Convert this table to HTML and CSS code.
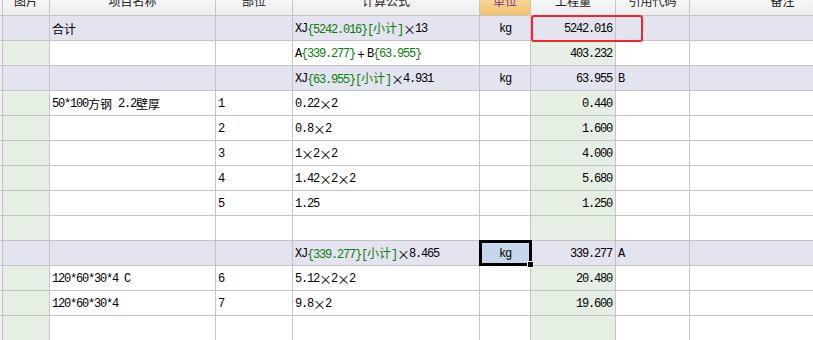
FILE: index.html
```html
<!DOCTYPE html>
<html lang="zh">
<head>
<meta charset="utf-8">
<title>工程量表</title>
<link rel="stylesheet" href="styles.css">
</head>
<body>
<div class="sheet">
  <div class="row head">
    <div class="cell"></div>
    <div class="cell"><span class="c">图片</span></div>
    <div class="cell"><span class="c">项目名称</span></div>
    <div class="cell"><span class="c">部位</span></div>
    <div class="cell"><span class="c">计算公式</span></div>
    <div class="cell unit-h"><span class="c">单位</span></div>
    <div class="cell"><span class="c">工程量</span></div>
    <div class="cell"><span class="c">引用代码</span></div>
    <div class="cell"><span class="c">备注</span></div>
  </div>

  <div class="row sum">
    <div class="cell"></div><div class="cell"></div>
    <div class="cell l"><span class="c">合计</span></div>
    <div class="cell"></div>
    <div class="cell l">XJ<span class="g">{5242.016}[<span class="c">小计</span>]</span><span class="x">×</span>13</div>
    <div class="cell m">kg</div>
    <div class="cell r boxed">5242.016<span class="redbox"></span></div>
    <div class="cell"></div><div class="cell"></div>
  </div>

  <div class="row">
    <div class="cell"></div><div class="cell"></div><div class="cell"></div><div class="cell"></div>
    <div class="cell l">A<span class="g">{339.277}</span><span class="x">+</span>B<span class="g">{63.955}</span></div>
    <div class="cell"></div>
    <div class="cell r">403.232</div>
    <div class="cell"></div><div class="cell"></div>
  </div>

  <div class="row sum">
    <div class="cell"></div><div class="cell"></div><div class="cell"></div><div class="cell"></div>
    <div class="cell l">XJ<span class="g">{63.955}[<span class="c">小计</span>]</span><span class="x">×</span>4.931</div>
    <div class="cell m">kg</div>
    <div class="cell r">63.955</div>
    <div class="cell l">B</div>
    <div class="cell"></div>
  </div>

  <div class="row">
    <div class="cell"></div><div class="cell"></div>
    <div class="cell l">50*100<span class="c">方钢</span><span class="sp"></span>2.2<span class="c">壁厚</span></div>
    <div class="cell l">1</div>
    <div class="cell l">0.22<span class="x">×</span>2</div>
    <div class="cell"></div>
    <div class="cell r">0.440</div>
    <div class="cell"></div><div class="cell"></div>
  </div>

  <div class="row">
    <div class="cell"></div><div class="cell"></div><div class="cell"></div>
    <div class="cell l">2</div>
    <div class="cell l">0.8<span class="x">×</span>2</div>
    <div class="cell"></div>
    <div class="cell r">1.600</div>
    <div class="cell"></div><div class="cell"></div>
  </div>

  <div class="row">
    <div class="cell"></div><div class="cell"></div><div class="cell"></div>
    <div class="cell l">3</div>
    <div class="cell l">1<span class="x">×</span>2<span class="x">×</span>2</div>
    <div class="cell"></div>
    <div class="cell r">4.000</div>
    <div class="cell"></div><div class="cell"></div>
  </div>

  <div class="row">
    <div class="cell"></div><div class="cell"></div><div class="cell"></div>
    <div class="cell l">4</div>
    <div class="cell l">1.42<span class="x">×</span>2<span class="x">×</span>2</div>
    <div class="cell"></div>
    <div class="cell r">5.680</div>
    <div class="cell"></div><div class="cell"></div>
  </div>

  <div class="row">
    <div class="cell"></div><div class="cell"></div><div class="cell"></div>
    <div class="cell l">5</div>
    <div class="cell l">1.25</div>
    <div class="cell"></div>
    <div class="cell r">1.250</div>
    <div class="cell"></div><div class="cell"></div>
  </div>

  <div class="row">
    <div class="cell"></div><div class="cell"></div><div class="cell"></div><div class="cell"></div>
    <div class="cell"></div><div class="cell"></div><div class="cell"></div><div class="cell"></div><div class="cell"></div>
  </div>

  <div class="row sum">
    <div class="cell"></div><div class="cell"></div><div class="cell"></div><div class="cell"></div>
    <div class="cell l">XJ<span class="g">{339.277}[<span class="c">小计</span>]</span><span class="x">×</span>8.465</div>
    <div class="cell m selected">kg<span class="selbox"><span class="handle"></span></span></div>
    <div class="cell r">339.277</div>
    <div class="cell l">A</div>
    <div class="cell"></div>
  </div>

  <div class="row">
    <div class="cell"></div><div class="cell"></div>
    <div class="cell l">120*60*30*4<span class="sp"></span>C</div>
    <div class="cell l">6</div>
    <div class="cell l">5.12<span class="x">×</span>2<span class="x">×</span>2</div>
    <div class="cell"></div>
    <div class="cell r">20.480</div>
    <div class="cell"></div><div class="cell"></div>
  </div>

  <div class="row">
    <div class="cell"></div><div class="cell"></div>
    <div class="cell l">120*60*30*4</div>
    <div class="cell l">7</div>
    <div class="cell l">9.8<span class="x">×</span>2</div>
    <div class="cell"></div>
    <div class="cell r">19.600</div>
    <div class="cell"></div><div class="cell"></div>
  </div>

  <div class="row">
    <div class="cell"></div><div class="cell"></div><div class="cell"></div><div class="cell"></div>
    <div class="cell"></div><div class="cell"></div><div class="cell"></div><div class="cell"></div><div class="cell"></div>
  </div>
</div>
</body>
</html>
```

FILE: styles.css
```css
html, body {
  margin: 0;
  padding: 0;
  background: #ffffff;
  overflow: hidden;
}

.sheet {
  display: grid;
  grid-template-columns: 3px 47px 166px 77px 187px 51px 85px 74px 186px;
  grid-auto-rows: 25px;
  margin-top: -9px;
  width: 876px;
  font-family: "Liberation Mono", "Noto Sans CJK SC", monospace;
  font-size: 12px;
  letter-spacing: -1.2px;
  line-height: 14px;
  color: #000;
}

.row {
  display: contents;
}

.cell {
  box-sizing: border-box;
  border-right: 1px solid #c4c4c4;
  border-bottom: 1px solid #c4c4c4;
  display: flex;
  align-items: center;
  white-space: nowrap;
  background: #ffffff;
  position: relative;
  padding-top: 1px;
}

.c {
  font-family: "Noto Sans CJK SC", sans-serif;
  font-size: 12px;
  letter-spacing: 0;
}

.sp {
  display: inline-block;
  width: 6px;
}

.x {
  display: inline-block;
  width: 12px;
  text-align: center;
  letter-spacing: 0;
  font-family: "Noto Sans CJK SC", sans-serif;
  font-size: 13px;
  line-height: 14px;
}

.g {
  color: #0a7d0a;
}

.l {
  justify-content: flex-start;
  padding-left: 2px;
}

.m {
  justify-content: center;
}

.r {
  justify-content: flex-end;
  padding-right: 3px;
}

/* first narrow column */
.row > .cell:nth-child(1) {
  background: #f2f2f2;
}

/* green columns in normal rows */
.row > .cell:nth-child(2),
.row > .cell:nth-child(7) {
  background: #e5efe3;
}

/* summary rows */
.row.sum > .cell {
  background: #e4e4f1;
}
.row.sum > .cell:nth-child(1) {
  background: #ececf2;
}

/* header */
.row.head > .cell {
  background: linear-gradient(#fbfbfb, #ededed);
  justify-content: center;
  align-items: center;
  padding-top: 0;
  padding-bottom: 5px;
  color: #222;
}
.row.head > .cell:nth-child(1) {
  background: #f2f2f2;
}
.row.head > .cell.unit-h {
  background: linear-gradient(#fbe2ad, #f2c36d);
  color: #7b2f8c;
}

.boxed {
  z-index: 2;
}

.redbox {
  position: absolute;
  left: 0;
  top: -1px;
  width: 112px;
  height: 27px;
  box-sizing: border-box;
  border: 2px solid #f0262a;
  border-radius: 3px;
  pointer-events: none;
}

.row.sum > .cell.selected {
  background: #c6d6ec;
  z-index: 2;
}

.selbox {
  position: absolute;
  left: -1px;
  top: -1px;
  width: 53px;
  height: 26px;
  box-sizing: border-box;
  border: 3px solid #000;
}

.handle {
  position: absolute;
  right: -5px;
  bottom: -5px;
  width: 5px;
  height: 5px;
  background: #000;
  border: 1px solid #fff;
}
```
